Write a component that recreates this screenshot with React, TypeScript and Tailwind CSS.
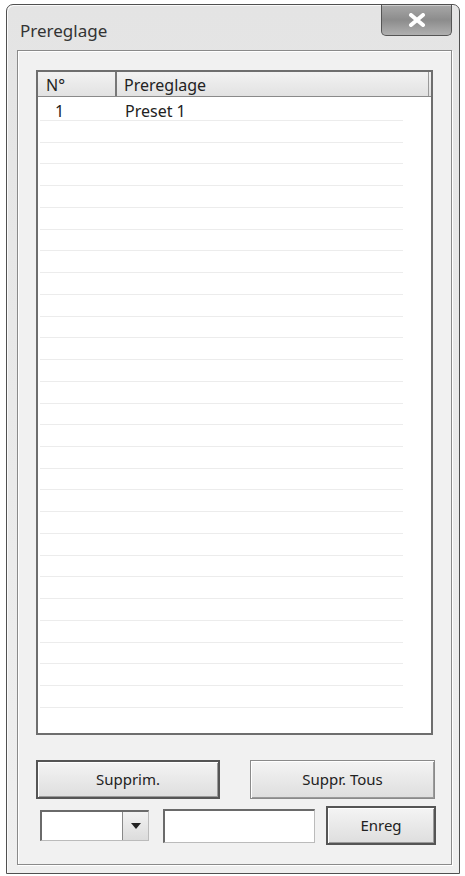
import React from 'react';

const font = { fontFamily: '"Noto Sans", "DejaVu Sans", sans-serif' };

type Preset = { no: number; name: string };

const presets: Preset[] = [{ no: 1, name: 'Preset 1' }];

// lignes vides de la liste
const EMPTY_ROWS = 27;

const WinButton: React.FC<{ label: string; className?: string }> = ({ label, className }) => (
  <button
    type="button"
    className={
      'flex items-center justify-center border border-[#4a4a4a] bg-gradient-to-b from-[#f4f4f4] to-[#dedede] text-[15px] text-[#222] shadow-[inset_1px_1px_0_#fff,inset_-1px_-1px_0_#9a9a9a] ' +
      (className || '')
    }
  >
    {label}
  </button>
);

export default function App() {
  return (
    <div className="w-[465px] h-[876px] bg-white pt-[4px] pl-[6px]" style={font}>
      <div className="w-[454px] h-[870px] flex flex-col border border-[#505050] rounded-t-[7px] bg-gradient-to-b from-[#e4e4e4] to-[#efefef] shadow-[inset_1px_1px_0_#fafafa]">
        {/* Title bar */}
        <div className="flex justify-between items-start h-[45px] shrink-0">
          <span className="pl-[13px] pt-[17px] text-[17px] text-[#333] leading-none">Prereglage</span>
          <div className="mr-[7px] w-[71px] h-[31px] rounded-b-[5px] border border-t-0 border-[#555] bg-gradient-to-b from-[#a8a8a8] via-[#8c8c8c] to-[#b0b0b0] flex items-center justify-center shadow-[inset_0_1px_0_#ccc]">
            <svg width="18" height="14" viewBox="0 0 18 14">
              <path d="M3 2 L15 12 M15 2 L3 12" stroke="#fff" strokeWidth="4" strokeLinecap="round" />
            </svg>
          </div>
        </div>

        {/* Group panel */}
        <div className="ml-[10px] w-[435px] h-[815px] border border-[#8a8a8a] shadow-[inset_1px_1px_0_#fff,1px_1px_0_#fff] bg-[#f1f1f1] flex flex-col pl-[18px] pt-[19px]">
          {/* List view */}
          <div className="w-[397px] h-[665px] border-2 border-[#6e6e6e] bg-white flex flex-col overflow-hidden">
            <div className="flex h-[25px] shrink-0 bg-gradient-to-b from-[#f2f2f2] to-[#e2e2e2] border-b border-[#8a8a8a] text-[16px] text-[#222]">
              <div className="w-[79px] border-r-2 border-[#777] pl-[8px] flex items-center pt-[2px]">N°</div>
              <div className="flex-1 pl-[7px] flex items-center pt-[2px] border-r border-[#999] mr-[2px]">Prereglage</div>
            </div>
            <div className="flex flex-col pr-[28px] pl-[2px]">
              {presets.map((p) => (
                <div key={p.no} className="flex h-[24px] shrink-0 items-end border-b border-[#ececec] text-[16px] text-[#222] leading-[18px]">
                  <span className="w-[79px] pl-[15px]">{p.no}</span>
                  <span className="pl-[6px]">{p.name}</span>
                </div>
              ))}
              {Array.from({ length: EMPTY_ROWS }).map((_, i) => (
                <div key={i} className="h-[21.74px] shrink-0 border-b border-[#ececec]" />
              ))}
            </div>
          </div>

          {/* Buttons */}
          <div className="flex justify-between w-[399px] mt-[25px]">
            <WinButton label="Supprim." className="w-[184px] h-[39px] border-2 border-[#555]" />
            <WinButton label="Suppr. Tous" className="w-[185px] h-[39px] border-[#8a8a8a]" />
          </div>

          <div className="flex items-center w-[400px] mt-[7px]">
            <div className="ml-[4px] w-[109px] h-[31px] border-2 border-[#6a6a6a] border-r border-b border-r-[#bbb] border-b-[#bbb] bg-white flex justify-end">
              <div className="w-[26px] h-full border-l border-[#888] bg-gradient-to-b from-[#f2f2f2] to-[#dcdcdc] flex items-center justify-center">
                <svg width="10" height="6" viewBox="0 0 10 6">
                  <path d="M0 0 H10 L5 6 Z" fill="#222" />
                </svg>
              </div>
            </div>
            <div className="ml-[14px] w-[152px] h-[34px] border-2 border-[#6a6a6a] border-r border-b border-r-[#bbb] border-b-[#bbb] bg-white" />
            <WinButton label="Enreg" className="ml-[11px] w-[110px] h-[39px] border-2 border-[#555]" />
          </div>
        </div>
      </div>
    </div>
  );
}
